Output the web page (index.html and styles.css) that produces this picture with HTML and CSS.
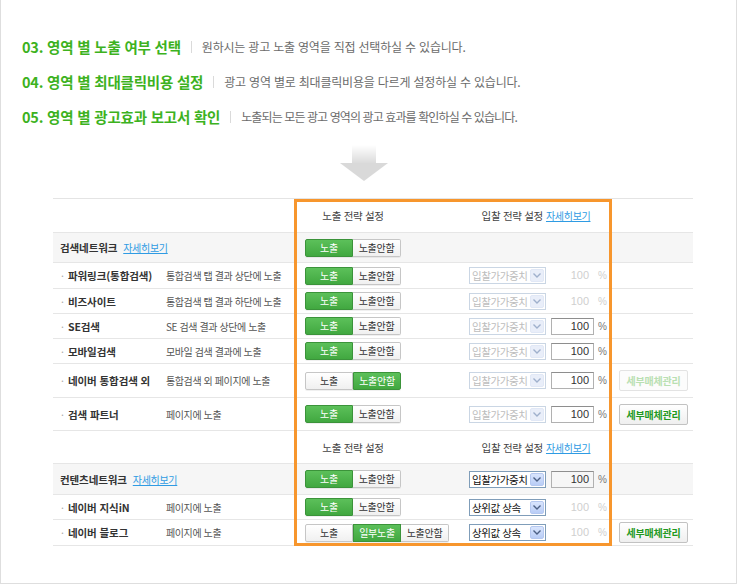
FILE: index.html
```html
<!DOCTYPE html>
<html lang="ko">
<head>
<meta charset="utf-8">
<title>영역 별 노출 설정</title>
<link rel="stylesheet" href="styles.css">
</head>
<body>
<div class="frame">
  <div class="intro">
    <div class="step"><span class="step-title">03. 영역 별 노출 여부 선택</span><span class="sep"></span><span class="step-desc">원하시는 광고 노출 영역을 직접 선택하실 수 있습니다.</span></div>
    <div class="step"><span class="step-title">04. 영역 별 최대클릭비용 설정</span><span class="sep"></span><span class="step-desc">광고 영역 별로 최대클릭비용을 다르게 설정하실 수 있습니다.</span></div>
    <div class="step"><span class="step-title">05. 영역 별 광고효과 보고서 확인</span><span class="sep"></span><span class="step-desc narrow">노출되는 모든 광고 영역의 광고 효과를 확인하실 수 있습니다.</span></div>
  </div>

  <div class="arrow">
    <svg width="48" height="36" viewBox="0 0 48 36">
      <defs>
        <linearGradient id="shaft" x1="0" y1="0" x2="0" y2="1">
          <stop offset="0" stop-color="#ffffff"/>
          <stop offset="1" stop-color="#d9d9d9"/>
        </linearGradient>
      </defs>
      <rect x="12" y="0" width="24" height="19" fill="url(#shaft)"/>
      <polygon points="0,18 48,18 24,36" fill="#d9d9d9"/>
    </svg>
  </div>

  <div class="table">
    <div class="row row-34">
      <div class="c-name span2"></div>
      <div class="c-ctl">
        <div class="exp"><span class="col-title">노출 전략 설정</span></div>
        <div class="bid bid-head">입찰 전략 설정 <a class="link">자세히보기</a></div>
      </div>
      <div class="c-btn"></div>
    </div>

    <div class="row row-30 group">
      <div class="c-name span2"><span class="group-name">검색네트워크</span> <a class="link">자세히보기</a></div>
      <div class="c-ctl">
        <div class="exp"><div class="toggle"><span class="seg on">노출</span><span class="seg">노출안함</span></div></div>
        <div class="bid"></div>
      </div>
      <div class="c-btn"></div>
    </div>

    <div class="row row-26">
      <div class="c-name"><span class="dot">·</span>파워링크(통합검색)</div>
      <div class="c-desc">통합검색 탭 결과 상단에 노출</div>
      <div class="c-ctl">
        <div class="exp"><div class="toggle"><span class="seg on">노출</span><span class="seg">노출안함</span></div></div>
        <div class="bid">
          <div class="sel off"><span class="sel-text">입찰가가중치</span><span class="sel-btn"><svg width="8" height="5" viewBox="0 0 8 5"><polyline points="0.5,0.5 4,4 7.5,0.5" fill="none" stroke="currentColor" stroke-width="1.4"/></svg></span></div>
          <div class="num off">100</div><span class="pct off">%</span>
        </div>
      </div>
      <div class="c-btn"></div>
    </div>

    <div class="row">
      <div class="c-name"><span class="dot">·</span>비즈사이트</div>
      <div class="c-desc">통합검색 탭 결과 하단에 노출</div>
      <div class="c-ctl">
        <div class="exp"><div class="toggle"><span class="seg on">노출</span><span class="seg">노출안함</span></div></div>
        <div class="bid">
          <div class="sel off"><span class="sel-text">입찰가가중치</span><span class="sel-btn"><svg width="8" height="5" viewBox="0 0 8 5"><polyline points="0.5,0.5 4,4 7.5,0.5" fill="none" stroke="currentColor" stroke-width="1.4"/></svg></span></div>
          <div class="num off">100</div><span class="pct off">%</span>
        </div>
      </div>
      <div class="c-btn"></div>
    </div>

    <div class="row">
      <div class="c-name"><span class="dot">·</span>SE검색</div>
      <div class="c-desc">SE 검색 결과 상단에 노출</div>
      <div class="c-ctl">
        <div class="exp"><div class="toggle"><span class="seg on">노출</span><span class="seg">노출안함</span></div></div>
        <div class="bid">
          <div class="sel off"><span class="sel-text">입찰가가중치</span><span class="sel-btn"><svg width="8" height="5" viewBox="0 0 8 5"><polyline points="0.5,0.5 4,4 7.5,0.5" fill="none" stroke="currentColor" stroke-width="1.4"/></svg></span></div>
          <div class="num">100</div><span class="pct">%</span>
        </div>
      </div>
      <div class="c-btn"></div>
    </div>

    <div class="row">
      <div class="c-name"><span class="dot">·</span>모바일검색</div>
      <div class="c-desc">모바일 검색 결과에 노출</div>
      <div class="c-ctl">
        <div class="exp"><div class="toggle"><span class="seg on">노출</span><span class="seg">노출안함</span></div></div>
        <div class="bid">
          <div class="sel off"><span class="sel-text">입찰가가중치</span><span class="sel-btn"><svg width="8" height="5" viewBox="0 0 8 5"><polyline points="0.5,0.5 4,4 7.5,0.5" fill="none" stroke="currentColor" stroke-width="1.4"/></svg></span></div>
          <div class="num">100</div><span class="pct">%</span>
        </div>
      </div>
      <div class="c-btn"></div>
    </div>

    <div class="row row-34">
      <div class="c-name"><span class="dot">·</span>네이버 통합검색 외</div>
      <div class="c-desc">통합검색 외 페이지에 노출</div>
      <div class="c-ctl">
        <div class="exp"><div class="toggle"><span class="seg">노출</span><span class="seg on">노출안함</span></div></div>
        <div class="bid">
          <div class="sel off"><span class="sel-text">입찰가가중치</span><span class="sel-btn"><svg width="8" height="5" viewBox="0 0 8 5"><polyline points="0.5,0.5 4,4 7.5,0.5" fill="none" stroke="currentColor" stroke-width="1.4"/></svg></span></div>
          <div class="num">100</div><span class="pct">%</span>
        </div>
      </div>
      <div class="c-btn"><span class="btn-detail off">세부매체관리</span></div>
    </div>

    <div class="row row-33">
      <div class="c-name"><span class="dot">·</span>검색 파트너</div>
      <div class="c-desc">페이지에 노출</div>
      <div class="c-ctl">
        <div class="exp"><div class="toggle"><span class="seg on">노출</span><span class="seg">노출안함</span></div></div>
        <div class="bid">
          <div class="sel off"><span class="sel-text">입찰가가중치</span><span class="sel-btn"><svg width="8" height="5" viewBox="0 0 8 5"><polyline points="0.5,0.5 4,4 7.5,0.5" fill="none" stroke="currentColor" stroke-width="1.4"/></svg></span></div>
          <div class="num">100</div><span class="pct">%</span>
        </div>
      </div>
      <div class="c-btn"><span class="btn-detail">세부매체관리</span></div>
    </div>

    <div class="row row-33">
      <div class="c-name span2"></div>
      <div class="c-ctl">
        <div class="exp"><span class="col-title">노출 전략 설정</span></div>
        <div class="bid bid-head">입찰 전략 설정 <a class="link">자세히보기</a></div>
      </div>
      <div class="c-btn"></div>
    </div>

    <div class="row row-31 group">
      <div class="c-name span2"><span class="group-name">컨텐츠네트워크</span> <a class="link">자세히보기</a></div>
      <div class="c-ctl">
        <div class="exp"><div class="toggle"><span class="seg on">노출</span><span class="seg">노출안함</span></div></div>
        <div class="bid">
          <div class="sel"><span class="sel-text">입찰가가중치</span><span class="sel-btn"><svg width="8" height="5" viewBox="0 0 8 5"><polyline points="0.5,0.5 4,4 7.5,0.5" fill="none" stroke="currentColor" stroke-width="1.4"/></svg></span></div>
          <div class="num">100</div><span class="pct">%</span>
        </div>
      </div>
      <div class="c-btn"></div>
    </div>

    <div class="row">
      <div class="c-name"><span class="dot">·</span>네이버 지식iN</div>
      <div class="c-desc">페이지에 노출</div>
      <div class="c-ctl">
        <div class="exp"><div class="toggle"><span class="seg on">노출</span><span class="seg">노출안함</span></div></div>
        <div class="bid">
          <div class="sel"><span class="sel-text">상위값 상속</span><span class="sel-btn"><svg width="8" height="5" viewBox="0 0 8 5"><polyline points="0.5,0.5 4,4 7.5,0.5" fill="none" stroke="currentColor" stroke-width="1.4"/></svg></span></div>
          <div class="num off">100</div><span class="pct off">%</span>
        </div>
      </div>
      <div class="c-btn"></div>
    </div>

    <div class="row row-26">
      <div class="c-name"><span class="dot">·</span>네이버 블로그</div>
      <div class="c-desc">페이지에 노출</div>
      <div class="c-ctl">
        <div class="exp"><div class="toggle"><span class="seg">노출</span><span class="seg on">일부노출</span><span class="seg">노출안함</span></div></div>
        <div class="bid">
          <div class="sel"><span class="sel-text">상위값 상속</span><span class="sel-btn"><svg width="8" height="5" viewBox="0 0 8 5"><polyline points="0.5,0.5 4,4 7.5,0.5" fill="none" stroke="currentColor" stroke-width="1.4"/></svg></span></div>
          <div class="num off">100</div><span class="pct off">%</span>
        </div>
      </div>
      <div class="c-btn"><span class="btn-detail">세부매체관리</span></div>
    </div>

    <div class="highlight"></div>
  </div>
</div>
</body>
</html>
```

FILE: styles.css
```css
* { box-sizing: border-box; }
html, body { margin: 0; padding: 0; background: #fff; }
body {
  font-family: "Noto Sans CJK KR", "Noto Sans", "Liberation Sans", sans-serif;
  color: #333;
}

.frame {
  width: 737px;
  height: 584px;
  border: 1px solid #dedede;
  border-top: none;
  position: relative;
}

/* intro steps */
.intro {
  padding: 37px 0 0 21px;
  display: flex;
  flex-direction: column;
  gap: 15px;
}
.step {
  display: flex;
  align-items: center;
  height: 20px;
  line-height: 20px;
  white-space: nowrap;
}
.step-title {
  font-size: 14.5px;
  font-weight: bold;
  color: #3db21e;
  letter-spacing: -0.2px;
}
.sep {
  width: 1px;
  height: 12px;
  background: #dadada;
  margin: 0 10px;
}
.step-desc {
  font-size: 12px;
  color: #6b6b6b;
  letter-spacing: -0.2px;
}
.step-desc.narrow { letter-spacing: -0.9px; }

/* arrow */
.arrow {
  margin-top: 18px;
  height: 36px;
  display: flex;
  justify-content: center;
  padding-right: 10px;
}
.arrow svg { display: block; }

/* table */
.table {
  position: relative;
  margin: 17px 0 0 52px;
  width: 640px;
  border-top: 1px solid #e4e4e4;
}
.row {
  display: grid;
  grid-template-columns: 112px 128px 318px 82px;
  align-items: center;
  height: 25px;
  border-bottom: 1px solid #e6e6e6;
}
.row-26 { height: 26px; }
.row-30 { height: 30px; }
.row-31 { height: 31px; }
.row-33 { height: 33px; }
.row-34 { height: 34px; }
.row.group { background: #f6f6f6; }

.c-name {
  padding-left: 8px;
  font-size: 10.5px;
  font-weight: bold;
  color: #333;
  white-space: nowrap;
  letter-spacing: -0.1px;
}
.c-name.span2 {
  grid-column: span 2;
  padding-left: 7px;
}
.dot {
  display: inline-block;
  width: 7px;
  color: #aaa;
  font-weight: normal;
}
.group-name {
  font-size: 10.5px;
  font-weight: bold;
  color: #333;
  margin-right: 3px;
}
.c-desc {
  padding-left: 1px;
  font-size: 10px;
  color: #555;
  white-space: nowrap;
  letter-spacing: -0.4px;
}
.link {
  color: #2f9be3;
  text-decoration: underline;
  font-size: 10px;
  font-weight: normal;
  letter-spacing: -0.3px;
}

.c-ctl {
  display: flex;
  align-items: center;
  height: 100%;
}
.exp {
  width: 176px;
  padding-left: 12px;
  display: flex;
  align-items: center;
}
.col-title {
  display: block;
  width: 96px;
  text-align: center;
  font-size: 10.5px;
  color: #444;
  letter-spacing: -0.3px;
  white-space: nowrap;
}
.bid {
  display: flex;
  align-items: center;
  width: 140px;
}
.bid-head {
  justify-content: center;
  font-size: 10.5px;
  color: #444;
  letter-spacing: -0.3px;
  white-space: nowrap;
  padding-right: 6px;
}
.bid-head .link { margin-left: 3px; }

/* toggle */
.toggle {
  display: flex;
  height: 18px;
  border-radius: 2px;
  box-shadow: 0 1px 0 rgba(0,0,0,0.06);
}
.seg {
  width: 48px;
  height: 18px;
  line-height: 16px;
  text-align: center;
  font-size: 10px;
  color: #333;
  border: 1px solid #c6c6c6;
  background: linear-gradient(#ffffff, #f0f0f0);
  letter-spacing: -0.3px;
}
.seg + .seg { border-left: none; }
.seg:first-child { border-radius: 2px 0 0 2px; }
.seg:last-child { border-radius: 0 2px 2px 0; }
.seg.on {
  color: #fff;
  background: linear-gradient(#5cc05a, #41a840);
  border-color: #3b933a;
}
.seg + .seg.on { border-left: 1px solid #3b933a; }
.seg.on + .seg { border-left: none; }

/* select */
.sel {
  width: 77px;
  height: 17px;
  border: 1px solid #7f9db9;
  background: #fff;
  display: flex;
  align-items: center;
  justify-content: space-between;
  padding: 0 1px 0 2px;
}
.sel-text {
  font-size: 10.5px;
  color: #111;
  white-space: nowrap;
  letter-spacing: -0.4px;
  line-height: 15px;
}
.sel-btn {
  width: 14px;
  height: 13px;
  background: linear-gradient(#d9e5fd, #b9cdf6);
  border: 1px solid #b5c8f0;
  border-radius: 2px;
  color: #4d6185;
  display: flex;
  align-items: center;
  justify-content: center;
}
.sel-btn svg { display: block; }
.sel.off { border-color: #cad6e4; }
.sel.off .sel-text { color: #bdbdbd; }
.sel.off .sel-btn {
  background: #e9eef9;
  border-color: #e1e8f6;
  color: #9fb0cc;
}

/* number box */
.num {
  width: 43px;
  height: 17px;
  margin-left: 5px;
  border: 1px solid #b1b1b1;
  border-top-color: #8e8e8e;
  text-align: right;
  padding-right: 4px;
  font-size: 11px;
  line-height: 15px;
  color: #333;
  font-family: "Liberation Sans", "Noto Sans", sans-serif;
}
.num.off {
  border-color: transparent;
  color: #cfcfcf;
}
.pct {
  margin-left: 4px;
  font-size: 10px;
  color: #777;
  font-family: "Liberation Sans", sans-serif;
}
.pct.off { color: #cfcfcf; }

/* detail button */
.c-btn {
  padding-left: 8px;
  display: flex;
  align-items: center;
}
.btn-detail {
  display: block;
  width: 69px;
  height: 21px;
  line-height: 19px;
  text-align: center;
  border: 1px solid #c2c2c2;
  border-radius: 2px;
  background: linear-gradient(#ffffff, #efefef);
  font-size: 10px;
  font-weight: bold;
  color: #1f9a1f;
  letter-spacing: -0.2px;
  white-space: nowrap;
}
.btn-detail.off {
  border-color: #e3e3e3;
  color: #b9e0b2;
  background: #fcfcfc;
}

/* orange highlight overlay */
.highlight {
  position: absolute;
  left: 241px;
  top: 0;
  width: 318px;
  height: 347px;
  border: 3px solid #f7962d;
  pointer-events: none;
}
```
